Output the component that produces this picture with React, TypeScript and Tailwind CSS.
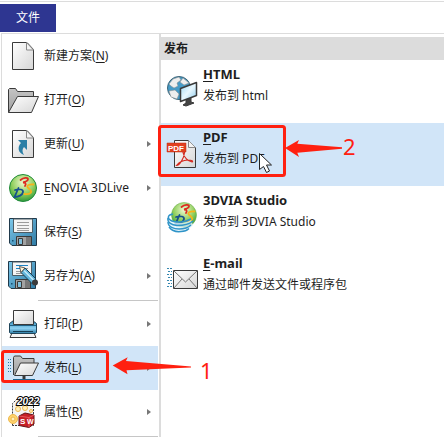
import type { ReactNode } from "react";

const INK = "#3a3a3a";

function Icon({ children }: { children: ReactNode }) {
  return (
    <svg viewBox="0 0 32 32" className="size-8 shrink-0 overflow-visible" aria-hidden="true">
      {children}
    </svg>
  );
}

function Gradients() {
  return (
    <svg className="absolute size-0" aria-hidden="true">
      <defs>
        <linearGradient id="paper" x1="0" y1="0" x2="1" y2="1">
          <stop offset="0" stopColor="#ffffff" />
          <stop offset="1" stopColor="#d6d6d6" />
        </linearGradient>
        <linearGradient id="folder" x1="0" y1="0" x2="0" y2="1">
          <stop offset="0" stopColor="#c4c4c4" />
          <stop offset="1" stopColor="#a0a0a0" />
        </linearGradient>
        <linearGradient id="blue" x1="0" y1="0" x2="1" y2="1">
          <stop offset="0" stopColor="#7cc7ea" />
          <stop offset="1" stopColor="#2f7ba5" />
        </linearGradient>
        <linearGradient id="tray" x1="0" y1="0" x2="0" y2="1">
          <stop offset="0" stopColor="#2a86b4" />
          <stop offset="0.6" stopColor="#8ed2f2" />
          <stop offset="1" stopColor="#2a79a3" />
        </linearGradient>
        <linearGradient id="screen" x1="0" y1="0" x2="1" y2="1">
          <stop offset="0" stopColor="#9fd9f5" />
          <stop offset="0.5" stopColor="#e9f8ff" />
          <stop offset="1" stopColor="#86c8ea" />
        </linearGradient>
        <radialGradient id="green" cx="0.5" cy="0.3" r="0.7">
          <stop offset="0" stopColor="#eefad0" />
          <stop offset="0.6" stopColor="#8fce5c" />
          <stop offset="1" stopColor="#2f9a3c" />
        </radialGradient>
      </defs>
    </svg>
  );
}

function Page() {
  return (
    <>
      <path d="M5.500 2.500H20l6.500 7v20h-21z" fill="url(#paper)" stroke={INK} strokeLinejoin="round" />
      <path d="M19.500 2.500v7.500h7z" fill="#f4f4f4" stroke="#888" strokeLinejoin="round" />
    </>
  );
}

const NewIcon = () => (
  <Icon>
    <Page />
  </Icon>
);

const OpenIcon = () => (
  <Icon>
    <path d="M1.500 28.500v-23l1-1h6l2 3h16v6" fill="url(#folder)" stroke={INK} />
    <path d="M1.500 28.500l9-16h21l-7 16z" fill="url(#paper)" stroke={INK} strokeLinejoin="round" />
  </Icon>
);

const UpdateIcon = () => (
  <Icon>
    <Page />
    <path d="M11 12h9v10l-3-3c-2 2-2 5 0 8-6-2-7-8-3-12z" fill="#2b7fa6" />
  </Icon>
);

function DsMark() {
  return (
    <g fill="none" strokeLinecap="round" strokeWidth="1.800">
      <path d="M13.500 8c3-2.500 7.500-2.800 7.500-1 0 1.800-3 3-5 3.500 2.500 0 3.500 1.200 2 3.500" stroke="#dd2c22" />
      <path d="M11.500 16l-4 9c4 0 8-2 8.500-5 .3-2.500-3-3.500-8-2" stroke="#17508e" />
      <path d="M26.500 12.500c-4-.5-7 1-6 2.500 1 1.800 5 3.500 3.500 5.500-1 1.500-3.500 2-6.500 1.500" stroke="#f7b21b" />
    </g>
  );
}

const EnoviaIcon = () => (
  <Icon>
    <circle cx="16" cy="16" r="13.500" fill="url(#green)" stroke="#1f8a3a" />
    <DsMark />
  </Icon>
);

function Disk({ children }: { children?: ReactNode }) {
  return (
    <>
      <path d="M2.500 2.500h27v27H5l-2.500-2.500z" fill="url(#blue)" stroke="#20394a" strokeLinejoin="round" />
      <path d="M6.500 3h19v13.500h-19z" fill="#f4f4f4" stroke="#4d5c64" />
      <path d="M10 6.500h12M10 9.500h12M10 12.500h12M10 14.500h12" stroke="#9b9b9b" />
      <path d="M9.500 20.500h15v9h-15z" fill="#a2a2a2" stroke={INK} />
      <path d="M11.500 22.500h4v6h-4z" fill="#7fbfdc" stroke={INK} />
      <path d="M19 21h5v8h-5z" fill="#777" />
      <path d="M5 24h1.500v1.500H5z" fill="#174f70" />
      {children}
    </>
  );
}

const SaveIcon = () => (
  <Icon>
    <Disk />
  </Icon>
);

const SaveAsIcon = () => (
  <Icon>
    <g transform="translate(-1 -1)">
      <Disk>
        <path d="M10 6.500h12M10 9.500h4" stroke="#1f83c4" />
      </Disk>
    </g>
    <path d="M14 12.500l4-4.500L29 19l-4 4.500z" fill="#65b7dc" stroke="#174258" strokeLinejoin="round" />
    <path d="M12.500 6.500l5.500 1.500-4 4.500z" fill="#fff3d5" stroke={INK} strokeWidth="0.800" />
    <path d="M17 10.500l10 10" stroke="#c5eafa" strokeWidth="1.500" />
    <circle cx="28" cy="22.500" r="3" fill="#3b3b3b" />
  </Icon>
);

const PrintIcon = () => (
  <Icon>
    <path d="M5 25h22l2 4.500H3z" fill="#f3f3f3" stroke={INK} />
    <path d="M2.500 15.500l4-3h19l4 3v9l-1 1h-25l-1-1z" fill="url(#tray)" stroke="#204559" />
    <path d="M6 23.500h20" stroke="#173e53" />
    <path d="M6.500 2.500h20v14h-20z" fill="url(#paper)" stroke={INK} />
    <path d="M3 17.500h26" stroke="#1f5f82" />
  </Icon>
);

const PublishIcon = () => (
  <Icon>
    <path d="M1 7.500h4M1 10.500h4M1 13.500h4M1 16.500h4M1 19.500h4" stroke="#287aa3" strokeDasharray="1 1" />
    <path d="M6.500 23V5.500l1-1.500h6l2 2.500h11.500v5" fill="url(#folder)" stroke={INK} />
    <path d="M7.500 23.500l6-12.500h18l-6 12.500z" fill="url(#paper)" stroke={INK} strokeLinejoin="round" />
    <path d="M17 24v4" stroke={INK} strokeWidth="3" />
    <path d="M6 28h22" stroke="#1b6590" strokeWidth="2" />
  </Icon>
);

const PropertiesIcon = () => (
  <Icon>
    <path d="M5.500 29.500v-22l6-6h15v28z" fill="#f4f4f4" stroke="#3d3d3d" strokeDasharray="2 1" />
    <g fill="#fff0ba" stroke="#edb84e">
      <circle cx="11" cy="13" r="2.500" />
      <circle cx="18" cy="12" r="2.500" />
      <circle cx="24" cy="15" r="1.500" />
      <circle cx="6" cy="23" r="4.500" fill="#ffd36c" />
      <circle cx="6" cy="23" r="2" />
    </g>
    <path d="M12 20l6-3 9 2v9l-5 3.500-10-2z" fill="#c62026" stroke="#65151a" />
    <path d="M12 20l10 1.500v10M22 21.500l5-2.500" fill="none" stroke="#ed6568" strokeWidth="0.800" />
    <text x="13" y="28" fontFamily="Liberation Sans" fontSize="8" fontWeight="700" fill="#fff">S</text>
    <text x="20" y="28" fontFamily="Liberation Sans" fontSize="7" fontWeight="700" fill="#fff">W</text>
    <text x="10" y="9" fontFamily="Liberation Sans" fontSize="10" fontStyle="italic" fontWeight="700" fill="#fff" stroke="#000" strokeWidth="2" paintOrder="stroke">2022</text>
  </Icon>
);

const HtmlIcon = () => (
  <Icon>
    <circle cx="13" cy="13" r="11.500" fill="#469bc7" stroke="#3b6478" />
    <path d="M3 9l4-5 6-2 2 3-4 3 1 3-4 2-3-2zM17 3l6 5-5 2-4-3zM3 16l6-1 4 4-2 5-6-2z" fill="#eee" stroke="#888" strokeWidth="0.500" />
    <path d="M20 24v4l-3 2 3 1 8-3-3-1v-4" fill="#444" stroke={INK} />
    <path d="M14.500 13.500l16-6v13l-16 6z" fill="url(#screen)" stroke={INK} strokeWidth="1.500" strokeLinejoin="round" />
  </Icon>
);

const PdfIcon = () => (
  <Icon>
    <path d="M8.500 2.500h14l7 7v20h-21z" fill="url(#paper)" stroke={INK} strokeLinejoin="round" />
    <path d="M22.500 2.500v7h7" fill="#f4f4f4" stroke="#888" />
    <path d="M10.500 27.500c3 0 7.500-7 8-13 0-2-1.500-1.500-1.500 0 1 5 5 9 9 9.500 1.500-.5 0-2-4-2-4.500.2-8.500 1.500-11.500 5.500z" fill="none" stroke="#d3291f" strokeWidth="1.200" />
    <path d="M1 5h19v9H1z" fill="#e2401f" stroke="#b92c14" strokeWidth="0.500" />
    <text x="2" y="12.500" fontFamily="Liberation Sans" fontSize="8" fontWeight="700" fill="#fff">PDF</text>
  </Icon>
);

const ViaIcon = () => (
  <Icon>
    <circle cx="18" cy="14" r="12.500" fill="url(#green)" stroke="#65a845" strokeWidth="0.500" />
    <g transform="translate(2 -2)">
      <DsMark />
    </g>
    <path d="M4 17c3 6 16 6 21 2l2 5c-6 8-20 7-24 2z" fill="#dff2fb" fillOpacity="0.800" />
    <g fill="none" stroke="#2f94c8" strokeWidth="1.500">
      <path d="M7 13c-6 1-6 5-1 7 5 2 14 1 19-2" />
      <path d="M2 17c-1 5 4 7 9 7.500 6 0 12-1 16-4.500" />
      <path d="M2 21c0 5 6 7 11 7 5 0 9-1 12-4" />
      <path d="M3 26c3 4 8 5 12 4.500 4 0 6-1 8-3" />
    </g>
  </Icon>
);

const MailIcon = () => (
  <Icon>
    <path d="M1 4.500h5M2 7.500h4M1 10.500h5M2 13.500h4M1 16.500h5M2 19.500h4M1 22.500h5" stroke="#3688b0" strokeDasharray="2 1" />
    <path d="M7.500 6.500h24v18h-24z" fill="url(#paper)" stroke={INK} />
    <path d="M8 7l11.500 11L31 7M8 24l8-9M31 24l-8-9" fill="none" stroke="#777" />
  </Icon>
);

type MenuEntry = { label: string; hotkey?: string; lead?: string; icon: ReactNode; submenu?: boolean; active?: boolean };

const fileEntries: MenuEntry[] = [
  { label: "新建方案", hotkey: "N", icon: <NewIcon /> },
  { label: "打开", hotkey: "O", icon: <OpenIcon /> },
  { label: "更新", hotkey: "U", icon: <UpdateIcon />, submenu: true },
  { label: "NOVIA 3DLive", lead: "E", icon: <EnoviaIcon />, submenu: true },
  { label: "保存", hotkey: "S", icon: <SaveIcon /> },
  { label: "另存为", hotkey: "A", icon: <SaveAsIcon />, submenu: true },
];

const outputEntries: MenuEntry[] = [
  { label: "打印", hotkey: "P", icon: <PrintIcon />, submenu: true },
  { label: "发布", hotkey: "L", icon: <PublishIcon />, submenu: true, active: true },
  { label: "属性", hotkey: "R", icon: <PropertiesIcon />, submenu: true },
];

function MenuRow({ entry }: { entry: MenuEntry }) {
  return (
    <button type="button" className={`flex h-11 w-full items-center gap-[5px] px-[5px] text-left ${entry.active ? "bg-[#d1e5f8]" : ""}`}>
      {entry.icon}
      <span className="flex-1 whitespace-nowrap">
        {entry.lead && <u className="underline-offset-2">{entry.lead}</u>}
        {entry.label}
        {entry.hotkey && (
          <>
            (<u className="underline-offset-2">{entry.hotkey}</u>)
          </>
        )}
      </span>
      {entry.submenu && (
        <svg viewBox="0 0 4 6" className="mr-0.5 h-1.5 w-1" aria-hidden="true">
          <path d="M0 0l4 3-4 3z" fill="#777" />
        </svg>
      )}
    </button>
  );
}

const Separator = () => <hr className="mt-0.5 ml-9 border-t border-[#c6c6c6]" />;

const targets = [
  { lead: "H", title: "TML", text: "发布到 html", icon: <HtmlIcon /> },
  { lead: "P", title: "DF", text: "发布到 PDF", icon: <PdfIcon />, active: true },
  { lead: "", title: "3DVIA Studio", text: "发布到 3DVIA Studio", icon: <ViaIcon /> },
  { lead: "E", title: "-mail", text: "通过邮件发送文件或程序包", icon: <MailIcon /> },
];

function Annotations() {
  return (
    <div className="pointer-events-none absolute inset-0 text-[22px] leading-6 text-[#ff2010]">
      <svg width="444" height="437" className="absolute top-0 left-0" aria-hidden="true">
        <g fill="none" stroke="#ff2010" strokeWidth="3">
          <rect x="2.500" y="351.500" width="105" height="30" rx="2" />
          <rect x="159.500" y="126.500" width="125" height="49" rx="2" />
        </g>
        <g fill="#ff2010">
          <path d="M112.700 365.500l15-8.200-1.700 3.700 65 5.500v1l-64.500 2.700 1 4z" />
          <path d="M285 148l14-8-1.700 3.700 44.700 3.600v1.400l-44.700 4 1.700 4.300z" />
        </g>
        <path d="M259.500 153.500v16l4-3 3 6 3-1.500-3-6h5z" fill="#fff" stroke="#222" strokeLinejoin="round" />
      </svg>
      <span className="absolute top-[358px] left-[200px]">1</span>
      <span className="absolute top-[134px] left-[343px]">2</span>
    </div>
  );
}

export default function App() {
  return (
    <div className="relative overflow-hidden bg-white font-['Noto_Sans','Noto_Sans_CJK_SC',sans-serif] text-xs text-[#1e1e1e]">
      <Gradients />
      <header className="mt-px border-t border-[#dcdcdc] pt-0.5">
        <button type="button" className="block h-7 w-14 bg-[#2e3691] text-white">文件</button>
      </header>
      <main className="mt-px ml-px flex border-t border-[#dcdcdc]">
        <nav aria-label="文件" className="w-40 shrink-0 border-r-2 border-l border-[#dcdcdc] pr-px">
          {fileEntries.map((entry) => (
            <MenuRow key={entry.label} entry={entry} />
          ))}
          <Separator />
          <div className="pt-px">
            {outputEntries.map((entry) => (
              <MenuRow key={entry.label} entry={entry} />
            ))}
          </div>
          <Separator />
        </nav>
        <section className="min-w-0 flex-1 pt-[3px]">
          <h2 className="flex h-[23px] items-center bg-[#dcdcdc] pl-[3px] font-bold">发布</h2>
          {targets.map((target) => (
            <button
              key={target.title}
              type="button"
              className={`flex h-[63px] w-full items-start gap-[5px] pt-[3px] pl-[5px] text-left ${target.active ? "bg-[#d1e5f8]" : ""}`}
            >
              <span className="mt-3">{target.icon}</span>
              <span className="flex flex-col whitespace-nowrap leading-[22px]">
                <b className="text-[13px]">
                  {target.lead && <u className="underline-offset-2">{target.lead}</u>}
                  {target.title}
                </b>
                <span>{target.text}</span>
              </span>
            </button>
          ))}
        </section>
      </main>
      <Annotations />
    </div>
  );
}
